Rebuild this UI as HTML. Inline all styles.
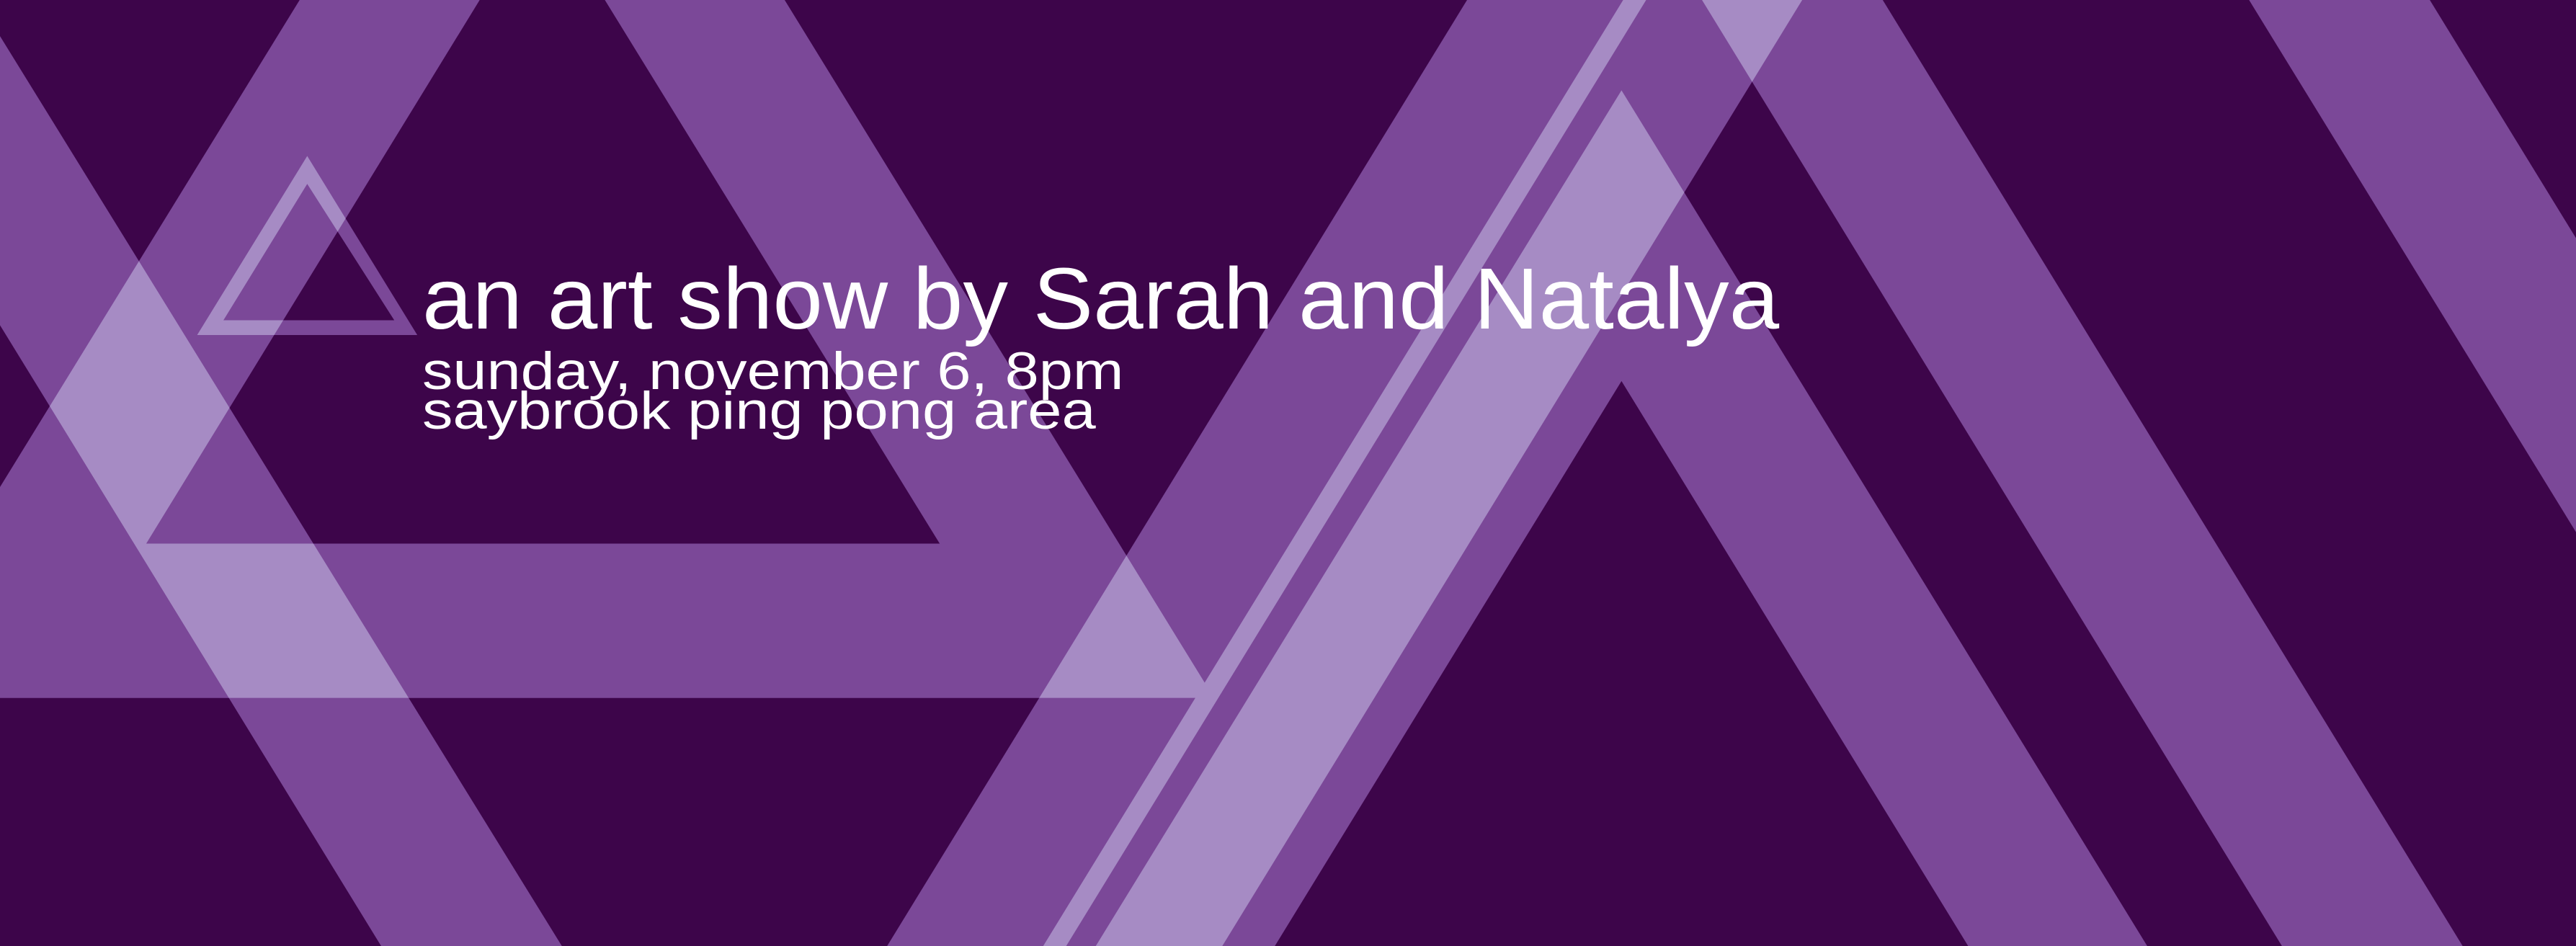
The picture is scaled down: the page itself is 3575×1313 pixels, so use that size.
<!DOCTYPE html>
<html><head><meta charset="utf-8"><style>
html,body{margin:0;padding:0;background:#3d054a;overflow:hidden}
svg{display:block}
</style></head><body>
<svg width="3575" height="1313" viewBox="0 0 1568 576" preserveAspectRatio="none" xmlns="http://www.w3.org/2000/svg">
<defs>
<path id="T" fill-rule="evenodd" clip-rule="evenodd" d="M330,-240 L739,425 L-79,425 Z M330,-62 L89,331 L572,331 Z"/>
<polygon id="L" points="-15,0 0,0 0,22 342,576 232,576 0,198 -15,175"/>
<path id="t" fill-rule="evenodd" clip-rule="evenodd" d="M187,95 L254,204 L120,204 Z M187,112 L136,195 L240,195 Z"/>
<polygon id="P" points="893,0 1002,0 649,576 540,576"/>
<polygon id="R" points="988,0 1097,0 744,576 635,576"/>
<polygon id="S" points="1036,0 1146,0 1499,576 1389,576"/>
<polygon id="U" points="1369,0 1479,0 1568,145 1568,324"/>
<path id="A" fill-rule="evenodd" clip-rule="evenodd" d="M987,55 L1307,576 L667,576 Z M987,232 L776,576 L1198,576 Z"/>
<clipPath id="cT"><use href="#T"/></clipPath>
<clipPath id="cP"><use href="#P"/></clipPath>
<clipPath id="cR"><use href="#R"/></clipPath>
</defs>
<rect width="1568" height="576" fill="#3d054a"/>
<g fill="#7b4898">
<use href="#T"/><use href="#L"/><use href="#t"/><use href="#P"/><use href="#R"/><use href="#S"/><use href="#U"/><use href="#A"/>
</g>
<g fill="#a68bc4">
<g clip-path="url(#cT)"><use href="#L"/><use href="#t"/><use href="#P"/></g>
<g clip-path="url(#cR)"><use href="#P"/><use href="#S"/><use href="#A"/></g>
</g>
<g fill="#ffffff" font-family="'Liberation Sans', Arial, sans-serif">
<text x="257" y="200" font-size="53" textLength="826" lengthAdjust="spacingAndGlyphs">an art show by Sarah and Natalya</text>
<text x="257" y="237" font-size="32" textLength="427" lengthAdjust="spacingAndGlyphs">sunday, november 6, 8pm</text>
<text x="257" y="261" font-size="32" textLength="410" lengthAdjust="spacingAndGlyphs">saybrook ping pong area</text>
</g>
</svg>
</body></html>
